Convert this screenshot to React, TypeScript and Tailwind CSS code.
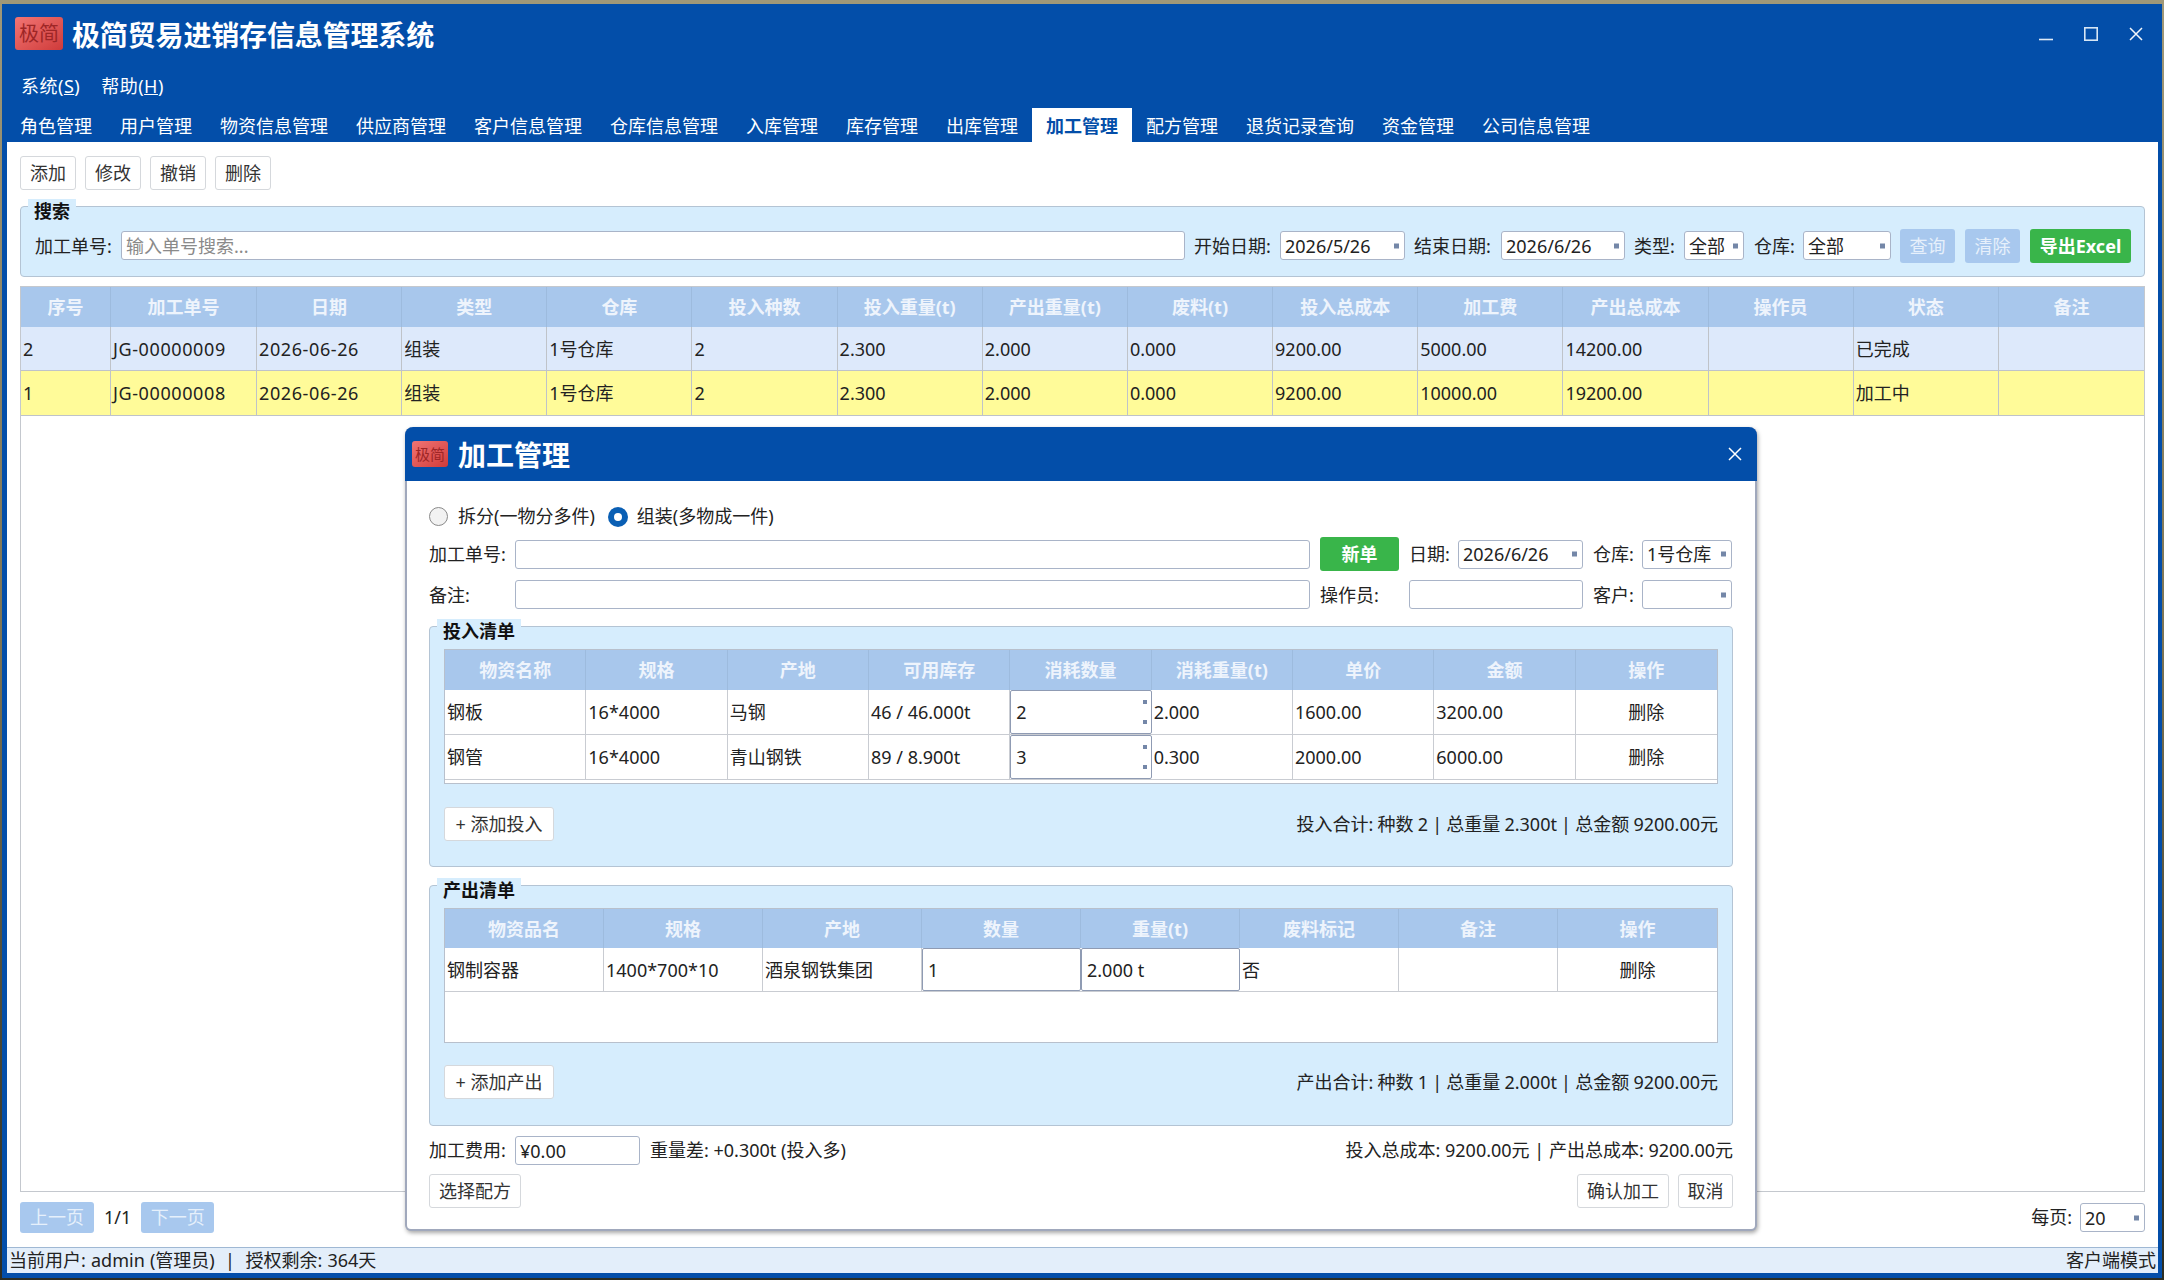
import React from "react";

const font = "font-['Noto_Sans','Noto_Sans_CJK_SC',sans-serif]";

function Logo({ small }: { small?: boolean }) {
  return (
    <div
      className={
        small
          ? "flex h-[26px] w-[36px] shrink-0 items-center justify-center rounded-[3px] bg-gradient-to-br from-[#f27474] to-[#cf3a3a] text-[15px] font-normal text-[#9e2626]"
          : "flex h-[33px] w-[48px] shrink-0 items-center justify-center rounded-[3px] bg-gradient-to-br from-[#f27474] to-[#cf3a3a] text-[20px] font-normal text-[#9e2626]"
      }
    >
      极简
    </div>
  );
}

function Btn({ children, className = "" }: { children: React.ReactNode; className?: string }) {
  return (
    <div className={"flex h-[34px] items-center justify-center rounded-[3px] border border-[#d5d8dc] bg-white text-[#333] " + className}>
      {children}
    </div>
  );
}

function Fill({ children, className = "" }: { children: React.ReactNode; className?: string }) {
  return <div className={"flex items-center justify-center rounded-[3px] " + className}>{children}</div>;
}

function Field({ value = "", placeholder, arrow, className = "" }: { value?: string; placeholder?: string; arrow?: boolean; className?: string }) {
  return (
    <div className={"relative flex h-[29px] shrink-0 items-center overflow-hidden whitespace-nowrap rounded-[3px] border border-[#a9b4c8] bg-white pl-[4px] pt-[1px] text-[#222] " + className}>
      {placeholder ? <span className="text-[#8a8a8a]">{placeholder}</span> : value}
      {arrow && <span className="absolute right-[5px] top-1/2 h-[5px] w-[5px] -translate-y-1/2 bg-[#7487a8]" />}
    </div>
  );
}

function Group({ title, className = "", children }: { title: string; className?: string; children: React.ReactNode }) {
  return (
    <div className={"relative rounded-[4px] border border-[#b4c4d4] bg-[#d6edfd] " + className}>
      <div className="absolute left-[7px] top-[-8px] bg-[#d6edfd] px-[6px] text-[18px] font-bold leading-[24px] text-[#111]">{title}</div>
      {children}
    </div>
  );
}

const mainHead = ["序号", "加工单号", "日期", "类型", "仓库", "投入种数", "投入重量(t)", "产出重量(t)", "废料(t)", "投入总成本", "加工费", "产出总成本", "操作员", "状态", "备注"];
const mainRows = [
  { bg: "bg-[#dde9fb]", h: "h-[44px]", cells: ["2", "JG-00000009", "2026-06-26", "组装", "1号仓库", "2", "2.300", "2.000", "0.000", "9200.00", "5000.00", "14200.00", "", "已完成", ""] },
  { bg: "bg-[#fffb99]", h: "h-[45px]", cells: ["1", "JG-00000008", "2026-06-26", "组装", "1号仓库", "2", "2.300", "2.000", "0.000", "9200.00", "10000.00", "19200.00", "", "加工中", ""] },
];
const tabs = ["角色管理", "用户管理", "物资信息管理", "供应商管理", "客户信息管理", "仓库信息管理", "入库管理", "库存管理", "出库管理", "加工管理", "配方管理", "退货记录查询", "资金管理", "公司信息管理"];

const inHead = ["物资名称", "规格", "产地", "可用库存", "消耗数量", "消耗重量(t)", "单价", "金额", "操作"];
const inRows = [
  ["钢板", "16*4000", "马钢", "46 / 46.000t", "2", "2.000", "1600.00", "3200.00", "删除"],
  ["钢管", "16*4000", "青山钢铁", "89 / 8.900t", "3", "0.300", "2000.00", "6000.00", "删除"],
];
const outHead = ["物资品名", "规格", "产地", "数量", "重量(t)", "废料标记", "备注", "操作"];
const outRow = ["钢制容器", "1400*700*10", "酒泉钢铁集团", "1", "2.000 t", "否", "", "删除"];

function HeadCell({ children }: { children: React.ReactNode }) {
  return <div className="flex items-center justify-center border-r border-[#9dbbde] pt-[1px] text-[18px] font-bold text-[#eef4fc] last:border-r-0">{children}</div>;
}

export default function App() {
  return (
    <div className={"relative h-[1280px] w-[2164px] overflow-hidden bg-gradient-to-b from-[#a09878] via-[#7d7454] to-[#2c2d22] pb-[2px] pl-[2px] pr-[2px] pt-[4px] text-[18px] text-[#222] " + font}>
      <div className="flex h-[1274px] flex-col bg-[#034ea9] pb-[5px] pl-[5px] pr-[4px]">
        {/* Title bar */}
        <div className="flex h-[61px] shrink-0 items-start pl-[8px] pt-[13px]">
          <Logo />
          <div className="ml-[9px] mt-[2px] text-[28px] font-bold leading-[33px] tracking-[-0.15px] text-white">极简贸易进销存信息管理系统</div>
          <div className="ml-auto flex items-center gap-[31px] pr-[15px] pt-[10px]">
            <svg width="14" height="14" viewBox="0 0 14 14" fill="none" stroke="#dfeaf6" strokeWidth="1.6"><path d="M0 12.5h14" /></svg>
            <svg width="14" height="14" viewBox="0 0 14 14" fill="none" stroke="#d7e6f5" strokeWidth="1.6"><rect x="0.8" y="0.8" width="12.4" height="12.4" /></svg>
            <svg width="14" height="14" viewBox="0 0 14 14" fill="none" stroke="#f2f6fb" strokeWidth="1.5"><path d="M1 1l12 12M13 1L1 13" /></svg>
          </div>
        </div>
        {/* Menu */}
        <div className="flex h-[43px] shrink-0 items-center gap-[21px] pl-[14px] tracking-[0.5px] text-white">
          <span>系统(<u>S</u>)</span>
          <span>帮助(<u>H</u>)</span>
        </div>
        {/* Tabs */}
        <div className="ml-[-1px] flex h-[34px] shrink-0 items-end">
          {tabs.map((t) => (
            <div
              key={t}
              className={
                t === "加工管理"
                  ? "flex h-[34px] items-center bg-white px-[14px] pt-[2px] font-bold text-[#034ea9]"
                  : "flex h-[34px] items-center px-[14px] pt-[2px] text-white"
              }
            >
              {t}
            </div>
          ))}
        </div>
        {/* Content */}
        <div className="flex min-h-0 flex-1 flex-col bg-white">
          <div className="flex h-[47px] shrink-0 items-start gap-[9px] pl-[13px] pt-[14px]">
            {["添加", "修改", "撤销", "删除"].map((b) => (
              <Btn key={b} className="w-[56px]">{b}</Btn>
            ))}
          </div>
          <Group title="搜索" className="mx-[13px] mt-[17px] h-[71px] shrink-0">
            <div className="flex h-full items-start pl-[14px] pt-[24px]">
              <span className="w-[86px] shrink-0 pt-[1px] leading-[29px]">加工单号:</span>
              <Field placeholder="输入单号搜索..." className="w-[1064px]" />
              <span className="ml-[9px] w-[86px] shrink-0 pt-[1px] leading-[29px]">开始日期:</span>
              <Field value="2026/5/26" arrow className="w-[125px]" />
              <span className="ml-[9px] w-[87px] shrink-0 pt-[1px] leading-[29px]">结束日期:</span>
              <Field value="2026/6/26" arrow className="w-[124px]" />
              <span className="ml-[9px] w-[50px] shrink-0 pt-[1px] leading-[29px]">类型:</span>
              <Field value="全部" arrow className="w-[60px]" />
              <span className="ml-[10px] w-[49px] shrink-0 pt-[1px] leading-[29px]">仓库:</span>
              <Field value="全部" arrow className="w-[88px]" />
              <Fill className="ml-[9px] mt-[-2px] h-[34px] w-[55px] bg-[#a8c8ee] text-[#e6f0fb]">查询</Fill>
              <Fill className="ml-[10px] mt-[-2px] h-[34px] w-[55px] bg-[#a8c8ee] text-[#e6f0fb]">清除</Fill>
              <Fill className="ml-[10px] mt-[-2px] h-[34px] w-[101px] bg-[#39b54a] font-bold text-white">导出Excel</Fill>
            </div>
          </Group>
          {/* Main table */}
          <div className="mx-[13px] mt-[9px] h-[906px] shrink-0 border border-[#c4c8ce] bg-white">
            <div className="grid h-[40px] grid-cols-[90px_146px_repeat(13,1fr)] bg-[#a8c7ec]">
              {mainHead.map((h) => (
                <HeadCell key={h}>{h}</HeadCell>
              ))}
            </div>
            {mainRows.map((r) => (
              <div key={r.cells[1]} className={"grid grid-cols-[90px_146px_repeat(13,1fr)] border-b border-[#bfc3c9] " + r.h + " " + r.bg}>
                {r.cells.map((c, i) => (
                  <div key={i} className={i === 1 || i === 2 ? "flex items-center border-r border-[#bfc3c9] pl-[2px] pt-[1px] tracking-[0.6px]" : "flex items-center border-r border-[#bfc3c9] pl-[2px] pt-[1px] last:border-r-0"}>{c}</div>
                ))}
              </div>
            ))}
          </div>
          {/* Pager */}
          <div className="mx-[13px] mt-[10px] flex h-[31px] shrink-0 items-center">
            <Fill className="h-[31px] w-[74px] bg-[#a8c8ee] text-[#e6f0fb]">上一页</Fill>
            <span className="ml-[10px]">1/1</span>
            <Fill className="ml-[10px] h-[31px] w-[73px] bg-[#a8c8ee] text-[#e6f0fb]">下一页</Fill>
            <span className="ml-auto mr-[8px]">每页:</span>
            <Field value="20" arrow className="w-[65px]" />
          </div>
          <div className="flex-1" />
          {/* Status */}
          <div className="flex h-[26px] shrink-0 items-center justify-between border-t border-[#9fb8d4] bg-[#e3eefa] pl-[2px] pr-[2px]">
            <span className="whitespace-pre [word-spacing:0.5px]">当前用户: admin (管理员)  |  授权剩余: 364天</span>
            <span>客户端模式</span>
          </div>
        </div>
      </div>

      {/* Modal dialog */}
      <div className="absolute left-[405px] top-[427px] flex h-[804px] w-[1352px] flex-col rounded-t-[8px] rounded-b-[6px] border-x-2 border-b-2 border-[#a0a8bc] bg-white shadow-[1px_2px_4px_rgba(0,0,0,0.35)]">
        <div className="mx-[-2px] flex h-[54px] shrink-0 items-center rounded-t-[8px] bg-[#034ea9] pl-[7px]">
          <Logo small />
          <span className="ml-[10px] mt-[1px] text-[28px] font-bold text-white">加工管理</span>
          <svg className="ml-auto mr-[15px]" width="14" height="14" viewBox="0 0 14 14" fill="none" stroke="#fff" strokeWidth="1.5"><path d="M1 1l12 12M13 1L1 13" /></svg>
        </div>
        <div className="flex flex-1 flex-col px-[22px]">
          {/* Radios */}
          <div className="mt-[18px] flex h-[34px] shrink-0 items-center pt-[1px]">
            <span className="h-[19px] w-[19px] rounded-full border border-[#8a8a8a] bg-[#f2f2f2]" />
            <span className="ml-[10px]">拆分(一物分多件)</span>
            <span className="ml-[13px] flex h-[20px] w-[20px] items-center justify-center rounded-full bg-[#0a5fb4]"><span className="h-[8px] w-[8px] rounded-full bg-white" /></span>
            <span className="ml-[9px]">组装(多物成一件)</span>
          </div>
          {/* Row 1 */}
          <div className="mt-[4px] flex h-[34px] shrink-0 items-center">
            <span className="w-[86px] shrink-0 pt-[1px]">加工单号:</span>
            <Field className="w-[795px]" />
            <Fill className="ml-[10px] h-[34px] w-[79px] bg-[#39b54a] font-bold text-white">新单</Fill>
            <span className="ml-[10px] w-[49px] shrink-0 pt-[1px]">日期:</span>
            <Field value="2026/6/26" arrow className="w-[125px]" />
            <span className="ml-[10px] w-[49px] shrink-0 pt-[1px]">仓库:</span>
            <Field value="1号仓库" arrow className="w-[90px]" />
          </div>
          {/* Row 2 */}
          <div className="mt-[9px] flex h-[29px] shrink-0 items-center">
            <span className="w-[86px] shrink-0 pt-[1px]">备注:</span>
            <Field className="w-[795px]" />
            <span className="ml-[10px] w-[89px] shrink-0 pt-[1px]">操作员:</span>
            <Field className="w-[174px]" />
            <span className="ml-[10px] w-[49px] shrink-0 pt-[1px]">客户:</span>
            <Field arrow className="w-[90px]" />
          </div>
          {/* Input list */}
          <Group title="投入清单" className="mt-[17px] h-[241px] shrink-0">
            <div className="mx-[14px] mt-[22px] h-[135px] border border-[#b8c0cc] bg-white">
              <div className="grid h-[40px] grid-cols-9 bg-[#a8c7ec]">
                {inHead.map((h) => (<HeadCell key={h}>{h}</HeadCell>))}
              </div>
              {inRows.map((r) => (
                <div key={r[0]} className="grid h-[45px] grid-cols-9 border-b border-[#c9ccd2]">
                  {r.map((c, i) =>
                    i === 4 ? (
                      <div key={i} className="relative flex items-center rounded-[2px] border border-[#8f9bb3] pl-[5px]">
                        {c}
                        <span className="absolute right-[4px] top-[9px] h-[4px] w-[4px] bg-[#7487a8]" />
                        <span className="absolute bottom-[9px] right-[4px] h-[4px] w-[4px] bg-[#7487a8]" />
                      </div>
                    ) : (
                      <div key={i} className={i === 8 ? "flex items-center justify-center" : "flex items-center border-r border-[#c9ccd2] pl-[2px]"}>{c}</div>
                    )
                  )}
                </div>
              ))}
            </div>
            <div className="mx-[14px] mt-[23px] flex items-center justify-between">
              <Btn className="w-[110px]">+ 添加投入</Btn>
              <span className="[word-spacing:-0.5px]">投入合计: 种数 2 | 总重量 2.300t | 总金额 9200.00元</span>
            </div>
          </Group>
          {/* Output list */}
          <Group title="产出清单" className="mt-[18px] h-[241px] shrink-0">
            <div className="mx-[14px] mt-[22px] h-[135px] border border-[#b8c0cc] bg-white">
              <div className="grid h-[39px] grid-cols-8 bg-[#a8c7ec]">
                {outHead.map((h) => (<HeadCell key={h}>{h}</HeadCell>))}
              </div>
              <div className="grid h-[44px] grid-cols-8 border-b border-[#c9ccd2]">
                {outRow.map((c, i) =>
                  i === 3 || i === 4 ? (
                    <div key={i} className="flex items-center rounded-[2px] border border-[#8f9bb3] pl-[5px] pt-[1px]">{c}</div>
                  ) : (
                    <div key={i} className={i === 7 ? "flex items-center justify-center pt-[1px]" : "flex items-center border-r border-[#c9ccd2] pl-[2px] pt-[1px]"}>{c}</div>
                  )
                )}
              </div>
            </div>
            <div className="mx-[14px] mt-[22px] flex items-center justify-between">
              <Btn className="h-[33px] w-[110px]">+ 添加产出</Btn>
              <span className="[word-spacing:-0.5px]">产出合计: 种数 1 | 总重量 2.000t | 总金额 9200.00元</span>
            </div>
          </Group>
          {/* Footer */}
          <div className="mt-[10px] flex h-[29px] shrink-0 items-center">
            <span className="w-[86px] shrink-0">加工费用:</span>
            <Field value="¥0.00" className="w-[125px]" />
            <span className="ml-[10px]">重量差: +0.300t (投入多)</span>
            <span className="ml-auto">投入总成本: 9200.00元 | 产出总成本: 9200.00元</span>
          </div>
          <div className="mt-[9px] flex h-[34px] shrink-0 items-center">
            <Btn className="w-[92px]">选择配方</Btn>
            <Btn className="ml-auto w-[92px]">确认加工</Btn>
            <Btn className="ml-[9px] w-[55px]">取消</Btn>
          </div>
        </div>
      </div>
    </div>
  );
}
